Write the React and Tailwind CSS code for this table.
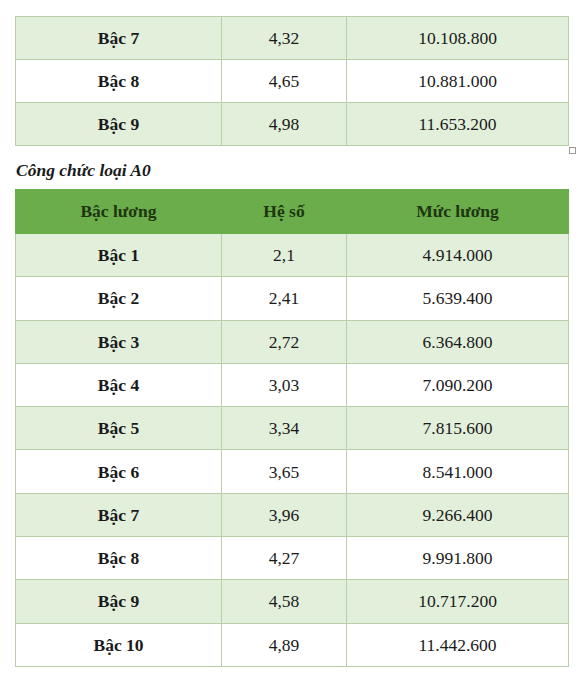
import React from "react";

const topRows = [
  ["Bậc 7", "4,32", "10.108.800"],
  ["Bậc 8", "4,65", "10.881.000"],
  ["Bậc 9", "4,98", "11.653.200"],
];

const a0Rows = [
  ["Bậc 1", "2,1", "4.914.000"],
  ["Bậc 2", "2,41", "5.639.400"],
  ["Bậc 3", "2,72", "6.364.800"],
  ["Bậc 4", "3,03", "7.090.200"],
  ["Bậc 5", "3,34", "7.815.600"],
  ["Bậc 6", "3,65", "8.541.000"],
  ["Bậc 7", "3,96", "9.266.400"],
  ["Bậc 8", "4,27", "9.991.800"],
  ["Bậc 9", "4,58", "10.717.200"],
  ["Bậc 10", "4,89", "11.442.600"],
];

function Rows({ rows, tall }) {
  return rows.map((r, i) => {
    const shaded = i % 2 === 0;
    const h = tall ? "h-[43.3px]" : "h-[43px]";
    return (
      <tr key={i} className={(shaded ? "bg-[#e2efda] " : "bg-white ") + h}>
        <td className="border border-[#b9cfa9] text-center font-bold">{r[0]}</td>
        <td className="border border-[#b9cfa9] text-center">{r[1]}</td>
        <td className="border border-[#b9cfa9] text-center">{r[2]}</td>
      </tr>
    );
  });
}

function Cols() {
  return (
    <colgroup>
      <col className="w-[206px]" />
      <col className="w-[125px]" />
      <col className="w-[222px]" />
    </colgroup>
  );
}

export default function App() {
  return (
    <div
      className="bg-white w-[580px] h-[678px] pt-[16px] pl-[15px] text-[17.5px] text-[#1a1a1a]"
      style={{ fontFamily: '"Liberation Serif", "Times New Roman", serif' }}
    >
      <div className="relative w-[553px]">
        <table className="w-[553px] border-collapse table-fixed">
          <Cols />
          <tbody>
            <Rows rows={topRows} />
          </tbody>
        </table>
        <div className="absolute right-[-8px] bottom-[-8px] w-[7px] h-[7px] border border-[#9a9a9a] bg-white" />
      </div>

      <p className="italic font-bold text-[17.5px] pt-[14px] pb-[9px] leading-[20px] pl-[1px]">
        Công chức loại A0
      </p>

      <table className="w-[553px] border-collapse table-fixed">
        <Cols />
        <thead>
          <tr className="bg-[#6aad4a] h-[44px] text-[#1d3510]">
            <th className="border border-[#6aad4a] text-center font-bold">Bậc lương</th>
            <th className="border border-[#6aad4a] text-center font-bold">Hệ số</th>
            <th className="border border-[#6aad4a] text-center font-bold">Mức lương</th>
          </tr>
        </thead>
        <tbody>
          <Rows rows={a0Rows} tall />
        </tbody>
      </table>
    </div>
  );
}
